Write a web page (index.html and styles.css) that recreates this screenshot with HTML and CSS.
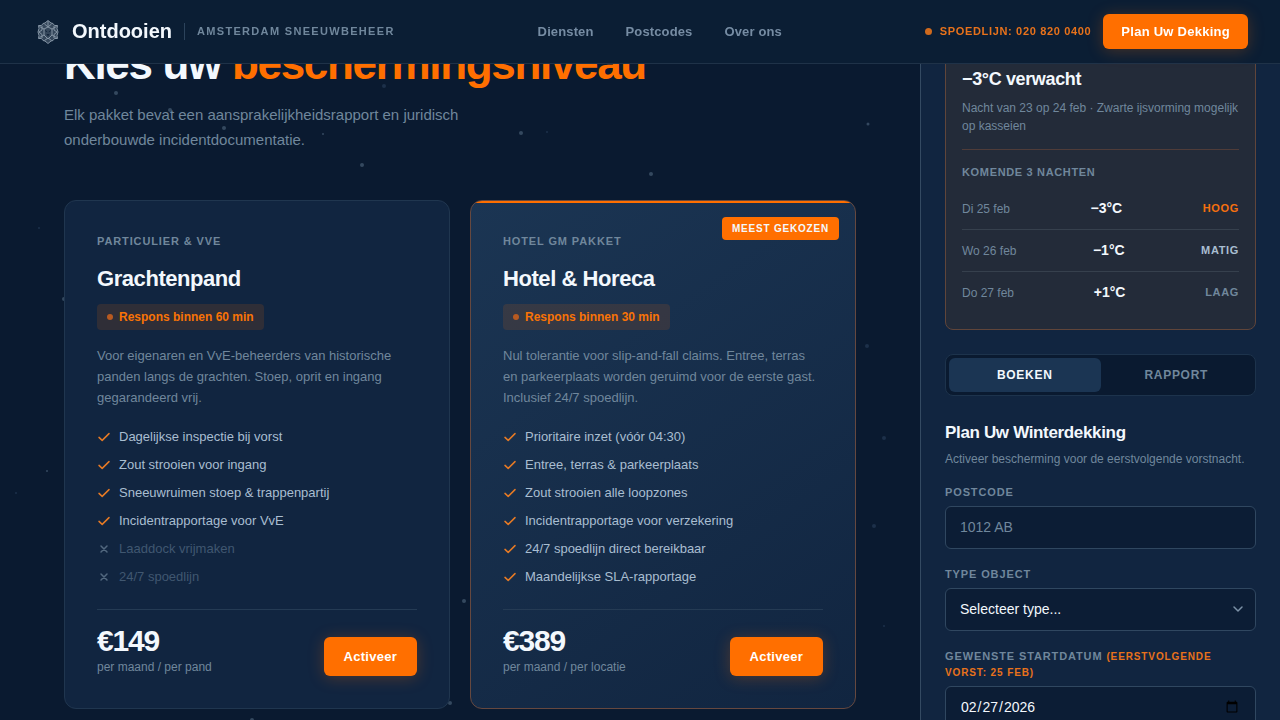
FILE: index.html
```html
<!DOCTYPE html>
<html lang="nl">
  <head>
    <meta charset="utf-8" />
    <meta name="viewport" content="initial-scale=1, width=device-width" />
    <title>Ontdooien</title>
    <link rel="stylesheet" href="styles.css">
  </head>
  <body>
    <svg class="icons" aria-hidden="true">
      <symbol id="check" viewBox="0 0 14 14"><path d="M2 7.4 5.2 10.4 12 3.6" /></symbol>
      <symbol id="cross" viewBox="0 0 14 14"><path d="M4 4 10 10M10 4 4 10" /></symbol>
    </svg>

    <header class="header">
      <a class="brand" href="#">
        <svg class="brand-logo" viewBox="0 0 32 32" aria-hidden="true">
          <path class="brand-shape" d="M16 4.5 19 7 21 7.500 22.500 9.500 25.500 9.500 25 12.500 26 16 25 19.500 25.500 22.500 22.500 22.500 21 24.500 19 25 16 27.500 13 25 11 24.500 9.500 22.500 6.500 22.500 7 19.500 6 16 7 12.500 6.500 9.500 9.500 9.500 11 7.500 13 7Z" />
          <path d="M16 5V10M12.500 8 16 11 19.500 8M7.500 10.500 12 13M24.500 10.500 20 13M10 10V14L7 16M22 10V14L25 16M7.500 21.500 12 19M24.500 21.500 20 19M10 22V18.500L7 16M22 22V18.500L25 16M12.500 24.500 16 22 19.500 24.500" />
          <path d="M12 13 16 11 20 13V19L16 23 12 19Z" />
          <path class="brand-face" d="M13 14.500 15.200 15.800M19 14.500 16.800 15.800M15 18.500H17L16 19.800Z" />
        </svg>
        <span class="brand-name">Ontdooien</span>
        <span class="brand-tag">Amsterdam Sneeuwbeheer</span>
      </a>
      <nav class="nav">
        <a href="#diensten">Diensten</a>
        <a href="#postcodes">Postcodes</a>
        <a href="#over">Over ons</a>
      </nav>
      <div class="header-actions">
        <a class="hotline" href="tel:+31208200400">Spoedlijn: 020 820 0400</a>
        <button class="btn btn-header" type="button">Plan Uw Dekking</button>
      </div>
    </header>

    <div class="page">
      <main class="main" id="diensten">
        <svg class="snow" aria-hidden="true">
          <circle cx="116" cy="93" r="2" />
          <circle cx="170" cy="110" r="2" />
          <circle cx="224" cy="128" r="2" />
          <circle cx="323" cy="134" r="1" />
          <circle cx="384" cy="86" r="2" class="far" />
          <circle cx="521" cy="133" r="2" />
          <circle cx="547" cy="132" r="1" class="far" />
          <circle cx="362" cy="165" r="2" />
          <circle cx="651" cy="174" r="2" />
          <circle cx="868" cy="124" r="1.5" />
          <circle cx="39" cy="228" r="1" class="far" />
          <circle cx="64" cy="299" r="2" />
          <circle cx="867" cy="346" r="2" class="far" />
          <circle cx="884" cy="438" r="2" class="far" />
          <circle cx="47" cy="471" r="1" />
          <circle cx="16" cy="493" r="1" class="far" />
          <circle cx="874" cy="526" r="2" class="far" />
          <circle cx="464" cy="601" r="2" />
          <circle cx="884" cy="626" r="1" class="far" />
          <circle cx="450" cy="703" r="2" />
          <circle cx="252" cy="720" r="2" />
        </svg>

        <h1 class="main-title">Kies uw <em>beschermingsniveau</em></h1>
        <p class="main-intro">Elk pakket bevat een aansprakelijkheidsrapport en juridisch onderbouwde incidentdocumentatie.</p>

        <div class="plans">
          <article class="plan">
            <p class="plan-label">Particulier &amp; VvE</p>
            <h2 class="plan-title">Grachtenpand</h2>
            <p class="plan-response">Respons binnen 60 min</p>
            <p class="plan-text">Voor eigenaren en VvE-beheerders van historische panden langs de grachten. Stoep, oprit en ingang gegarandeerd vrij.</p>
            <ul class="features">
              <li><svg><use href="#check" /></svg>Dagelijkse inspectie bij vorst</li>
              <li><svg><use href="#check" /></svg>Zout strooien voor ingang</li>
              <li><svg><use href="#check" /></svg>Sneeuwruimen stoep &amp; trappenpartij</li>
              <li><svg><use href="#check" /></svg>Incidentrapportage voor VvE</li>
              <li class="off"><svg><use href="#cross" /></svg>Laaddock vrijmaken</li>
              <li class="off"><svg><use href="#cross" /></svg>24/7 spoedlijn</li>
            </ul>
            <footer class="plan-footer">
              <div>
                <p class="price">€149</p>
                <p class="price-unit">per maand / per pand</p>
              </div>
              <button class="btn btn-plan" type="button">Activeer</button>
            </footer>
          </article>

          <article class="plan plan-featured">
            <span class="plan-flag">Meest gekozen</span>
            <p class="plan-label">Hotel GM Pakket</p>
            <h2 class="plan-title">Hotel &amp; Horeca</h2>
            <p class="plan-response">Respons binnen 30 min</p>
            <p class="plan-text">Nul tolerantie voor slip-and-fall claims. Entree, terras en parkeerplaats worden geruimd voor de eerste gast. Inclusief 24/7 spoedlijn.</p>
            <ul class="features">
              <li><svg><use href="#check" /></svg>Prioritaire inzet (vóór 04:30)</li>
              <li><svg><use href="#check" /></svg>Entree, terras &amp; parkeerplaats</li>
              <li><svg><use href="#check" /></svg>Zout strooien alle loopzones</li>
              <li><svg><use href="#check" /></svg>Incidentrapportage voor verzekering</li>
              <li><svg><use href="#check" /></svg>24/7 spoedlijn direct bereikbaar</li>
              <li><svg><use href="#check" /></svg>Maandelijkse SLA-rapportage</li>
            </ul>
            <footer class="plan-footer">
              <div>
                <p class="price">€389</p>
                <p class="price-unit">per maand / per locatie</p>
              </div>
              <button class="btn btn-plan" type="button">Activeer</button>
            </footer>
          </article>
        </div>
      </main>

      <aside class="sidebar">
        <section class="alert">
          <h2 class="alert-title">−3°C verwacht</h2>
          <p class="alert-text">Nacht van 23 op 24 feb · Zwarte ijsvorming mogelijk op kasseien</p>
          <h3 class="alert-label">Komende 3 nachten</h3>
          <ul class="nights">
            <li><span>Di 25 feb</span><strong>−3°C</strong><b class="high">Hoog</b></li>
            <li><span>Wo 26 feb</span><strong>−1°C</strong><b class="medium">Matig</b></li>
            <li><span>Do 27 feb</span><strong>+1°C</strong><b>Laag</b></li>
          </ul>
        </section>

        <div class="tabs">
          <button class="tab active" type="button">Boeken</button>
          <button class="tab" type="button">Rapport</button>
        </div>

        <form class="form">
          <h2 class="form-title">Plan Uw Winterdekking</h2>
          <p class="form-text">Activeer bescherming voor de eerstvolgende vorstnacht.</p>
          <div class="field">
            <label for="postcode">Postcode</label>
            <input id="postcode" type="text" placeholder="1012 AB" />
          </div>
          <div class="field">
            <label for="type">Type object</label>
            <div class="select">
              <select id="type">
                <option>Selecteer type...</option>
              </select>
              <svg viewBox="0 0 12 12" aria-hidden="true"><path d="M2 4 6 8 10 4" /></svg>
            </div>
          </div>
          <div class="field">
            <label for="start">Gewenste startdatum <span>(eerstvolgende vorst: 25 feb)</span></label>
            <input id="start" type="date" value="2026-02-27" />
          </div>
        </form>
      </aside>
    </div>
  </body>
</html>
```
FILE: styles.css
```css
* {
  box-sizing: border-box;
}
body {
  margin: 0;
  background-color: #0a1a30;
  color: #f3f8fd;
  font-family: "Liberation Sans", Arial, sans-serif;
  font-size: 13px;
}
h1,
h2,
h3,
p,
ul {
  margin: 0;
  padding: 0;
}
ul {
  list-style: none;
}
a {
  color: inherit;
  text-decoration: none;
}
.icons {
  display: none;
}

/* header */
.header {
  position: fixed;
  top: 0;
  left: 0;
  right: 0;
  z-index: 10;
  height: 64px;
  padding: 0 32px;
  display: flex;
  align-items: center;
  justify-content: space-between;
  background-color: #0b1e34;
  border-bottom: 1px solid #1f3248;
}
.brand {
  display: flex;
  align-items: center;
}
.brand-logo {
  width: 32px;
  height: 32px;
  margin-right: 8px;
  fill: none;
  stroke: #8595a5;
  stroke-width: 1;
}
.brand-shape {
  fill: #35475b;
}
.brand-face {
  stroke: #14263c;
}
.brand-name {
  font-size: 20px;
  font-weight: 700;
}
.brand-tag {
  margin-left: 12px;
  padding-left: 12px;
  border-left: 1px solid #2c435b;
  font-size: 11px;
  font-weight: 700;
  line-height: 17px;
  letter-spacing: 0.12em;
  text-transform: uppercase;
  color: #70879c;
}
.nav {
  display: flex;
  gap: 32px;
  font-weight: 700;
  letter-spacing: 0.01em;
  color: #768ca3;
}
.header-actions {
  display: flex;
  align-items: center;
  gap: 12px;
}
.hotline {
  display: flex;
  align-items: center;
  gap: 8px;
  font-size: 11px;
  font-weight: 700;
  line-height: 17px;
  letter-spacing: 0.06em;
  text-transform: uppercase;
  color: #e8721b;
}
.hotline::before {
  content: "";
  width: 7px;
  height: 7px;
  border-radius: 50%;
  background-color: #d06a1d;
}
.btn {
  border: 0;
  border-radius: 6px;
  background-color: #ff6f00;
  color: #fff;
  font-family: inherit;
  font-size: 13px;
  font-weight: 700;
  line-height: 15px;
  letter-spacing: 0.02em;
  box-shadow: 0 2px 16px rgba(255, 111, 0, 0.25);
}
.btn-header {
  padding: 10px 18px;
}
.btn-plan {
  padding: 12px 20px;
}

/* main column */
.page {
  display: grid;
  grid-template-columns: 1fr 360px;
  height: 100vh;
  overflow: hidden;
}
.main {
  padding: 40px 64px;
}
.snow {
  position: absolute;
  top: 0;
  left: 0;
  z-index: -1;
  width: 100%;
  height: 100%;
  fill: #34485f;
}
.snow .far {
  fill: #1d304a;
}
.main-title {
  font-size: 44px;
  line-height: 48px;
  letter-spacing: -0.03em;
}
.main-title em {
  font-style: normal;
  color: #ff6f00;
}
.main-intro {
  max-width: 480px;
  margin-top: 14px;
  font-size: 15px;
  line-height: 25px;
  color: #70879c;
}
.plans {
  display: grid;
  grid-template-columns: 1fr 1fr;
  gap: 20px;
  margin-top: 48px;
}
.plan {
  position: relative;
  padding: 32px;
  border: 1px solid #20364f;
  border-radius: 12px;
  background-color: #112540;
}
.plan-featured {
  border-color: #66483f;
  background: linear-gradient(145deg, #1b3553, #112540);
  overflow: hidden;
}
.plan-featured::before {
  content: "";
  position: absolute;
  top: 0;
  left: 0;
  right: 0;
  height: 2px;
  background-color: #ff6f00;
}
.plan-flag {
  position: absolute;
  top: 16px;
  right: 16px;
  padding: 4px 10px;
  border-radius: 4px;
  background-color: #ff6f00;
  font-size: 10px;
  font-weight: 700;
  line-height: 15px;
  letter-spacing: 0.08em;
  text-transform: uppercase;
}
.plan-label {
  font-size: 11px;
  font-weight: 700;
  line-height: 16px;
  letter-spacing: 0.08em;
  text-transform: uppercase;
  color: #70879c;
}
.plan-title {
  margin-top: 16px;
  font-size: 22px;
  line-height: 27px;
  letter-spacing: -0.02em;
}
.plan-response {
  display: flex;
  align-items: center;
  gap: 6px;
  width: fit-content;
  margin-top: 12px;
  padding: 5px 10px;
  border-radius: 4px;
  background-color: rgba(255, 111, 0, 0.13);
  font-size: 12px;
  font-weight: 700;
  line-height: 16px;
  color: #f97306;
}
.plan-response::before {
  content: "";
  width: 6px;
  height: 6px;
  border-radius: 50%;
  background-color: #b85a20;
}
.plan-text {
  margin-top: 15px;
  line-height: 21px;
  color: #70879c;
}
.features {
  display: grid;
  gap: 10px;
  margin-top: 20px;
  line-height: 18px;
  color: #a9bed1;
}
.features li {
  display: flex;
  align-items: center;
  gap: 8px;
}
.features svg {
  width: 14px;
  height: 14px;
  fill: none;
  stroke: #e67a25;
  stroke-width: 1.5;
  stroke-linecap: round;
  stroke-linejoin: round;
}
.features .off {
  color: #405770;
}
.features .off svg {
  stroke: #52687f;
}
.plan-footer {
  display: flex;
  align-items: flex-end;
  justify-content: space-between;
  margin-top: 23px;
  padding-top: 16px;
  border-top: 1px solid #253b54;
}
.price {
  font-size: 30px;
  font-weight: 700;
  line-height: 30px;
  letter-spacing: -0.04em;
}
.price-unit {
  margin-top: 2px;
  font-size: 12px;
  line-height: 18px;
  color: #70879c;
}

/* sidebar */
.sidebar {
  padding: 50px 24px 24px;
  border-left: 1px solid #344a62;
  background-color: #112540;
}
.alert {
  padding: 16px;
  border: 1px solid #60453a;
  border-radius: 8px;
  background-color: #232b39;
}
.alert-title {
  font-size: 18px;
  line-height: 24px;
  letter-spacing: -0.02em;
}
.alert-text {
  margin-top: 8px;
  padding-bottom: 14px;
  border-bottom: 1px solid #4f3c39;
  font-size: 12px;
  line-height: 18px;
  color: #70879c;
}
.alert-label {
  margin: 14px 0 8px;
  font-size: 11px;
  line-height: 16px;
  letter-spacing: 0.06em;
  text-transform: uppercase;
  color: #70879c;
}
.nights li {
  display: flex;
  align-items: baseline;
  justify-content: space-between;
  padding: 12px 0 11px;
  border-bottom: 1px solid #36404d;
  font-size: 12px;
  line-height: 17px;
  color: #70879c;
}
.nights li:last-child {
  border-bottom: 0;
}
.nights strong {
  font-size: 14px;
  color: #f3f8fd;
}
.nights b {
  align-self: flex-start;
  font-size: 11px;
  letter-spacing: 0.06em;
  text-transform: uppercase;
}
.nights .high {
  color: #f5700f;
}
.nights .medium {
  color: #a9bed1;
}
.tabs {
  display: flex;
  margin-top: 24px;
  padding: 3px;
  border: 1px solid #1d334c;
  border-radius: 8px;
  background-color: #0a1a30;
}
.tab {
  flex: 1;
  padding: 10px;
  border: 0;
  border-radius: 6px;
  background: none;
  font-family: inherit;
  font-size: 12px;
  font-weight: 700;
  line-height: 14px;
  letter-spacing: 0.06em;
  text-transform: uppercase;
  color: #70879c;
}
.tab.active {
  background-color: #1b3553;
  color: #f3f8fd;
}
.form {
  margin-top: 25px;
}
.form-title {
  font-size: 17px;
  line-height: 24px;
  letter-spacing: -0.02em;
}
.form-text {
  margin: 5px 0 16px;
  font-size: 12px;
  line-height: 18px;
  color: #70879c;
}
.field {
  margin-bottom: 17px;
}
.field label {
  display: block;
  margin-bottom: 6px;
  font-size: 11px;
  font-weight: 700;
  line-height: 16px;
  letter-spacing: 0.08em;
  text-transform: uppercase;
  color: #70879c;
}
.field label span {
  font-size: 10px;
  line-height: 14px;
  color: #e8721b;
}
.field input,
.field select {
  display: block;
  width: 100%;
  height: 43px;
  padding: 0 14px 2px;
  border: 1px solid #304760;
  border-radius: 6px;
  background-color: #0c1d35;
  color: #f3f8fd;
  font-family: inherit;
  font-size: 14px;
}
.field input::placeholder {
  color: #70879c;
}
.select {
  position: relative;
}
.select select {
  appearance: none;
}
.select svg {
  position: absolute;
  top: 15px;
  right: 12px;
  width: 12px;
  height: 12px;
  fill: none;
  stroke: #7c91a6;
  stroke-width: 1.5;
  stroke-linecap: round;
  stroke-linejoin: round;
}
```
